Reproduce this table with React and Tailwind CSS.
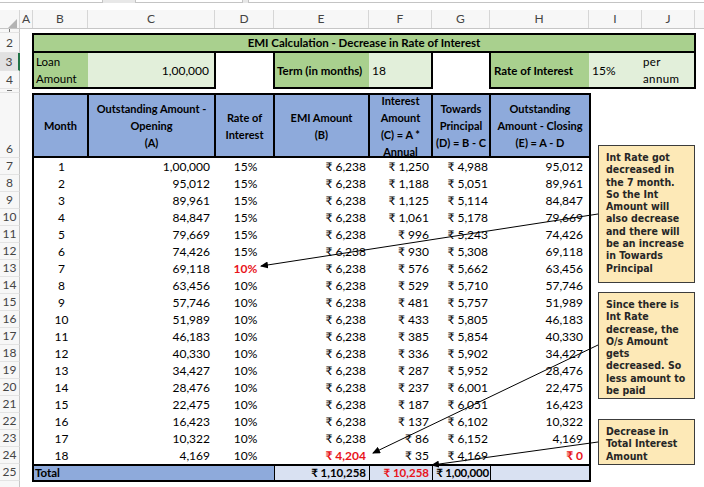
import React from 'react';

const GREEN = 'bg-[#a9d08e]';
const LIGHT_GREEN = 'bg-[#e2efda]';

// column letters across the top, widths follow the sheet grid
const colHeads = [
  { label: 'A', cls: 'w-[13px]' },
  { label: 'B', cls: 'w-[55px]' },
  { label: 'C', cls: 'w-[127px]' },
  { label: 'D', cls: 'w-[59px]' },
  { label: 'E', cls: 'w-[95px]' },
  { label: 'F', cls: 'w-[63px]' },
  { label: 'G', cls: 'w-[58px]' },
  { label: 'H', cls: 'w-[99px]' },
  { label: 'I', cls: 'w-[53px]' },
  { label: 'J', cls: 'w-[53px]' },
];

const data = [
  [1, '1,00,000', '15%', '6,238', '1,250', '4,988', '95,012'],
  [2, '95,012', '15%', '6,238', '1,188', '5,051', '89,961'],
  [3, '89,961', '15%', '6,238', '1,125', '5,114', '84,847'],
  [4, '84,847', '15%', '6,238', '1,061', '5,178', '79,669'],
  [5, '79,669', '15%', '6,238', '996', '5,243', '74,426'],
  [6, '74,426', '15%', '6,238', '930', '5,308', '69,118'],
  [7, '69,118', '10%', '6,238', '576', '5,662', '63,456'],
  [8, '63,456', '10%', '6,238', '529', '5,710', '57,746'],
  [9, '57,746', '10%', '6,238', '481', '5,757', '51,989'],
  [10, '51,989', '10%', '6,238', '433', '5,805', '46,183'],
  [11, '46,183', '10%', '6,238', '385', '5,854', '40,330'],
  [12, '40,330', '10%', '6,238', '336', '5,902', '34,427'],
  [13, '34,427', '10%', '6,238', '287', '5,952', '28,476'],
  [14, '28,476', '10%', '6,238', '237', '6,001', '22,475'],
  [15, '22,475', '10%', '6,238', '187', '6,051', '16,423'],
  [16, '16,423', '10%', '6,238', '137', '6,102', '10,322'],
  [17, '10,322', '10%', '6,238', '86', '6,152', '4,169'],
  [18, '4,169', '10%', '4,204', '35', '4,169', '₹ 0'],
];

const TopStrip = () => (
  <div className="h-[10px] bg-white">
    <div className="flex h-[3px] bg-[#e8e8e8]">
      <div className="w-[103px] bg-white border-b border-r border-[#c4c4c4]" />
      <div className="w-[32px]" />
      <div className="w-[108px] bg-white border-b border-x border-[#c4c4c4]" />
      <div className="w-[5px]" />
      <div className="flex-1 bg-white border-b border-l border-[#c4c4c4]" />
    </div>
  </div>
);

const ColHeaders = () => (
  <div className="flex h-[19px] bg-[#f7f7f7] border-b border-[#c6c6c6] text-[12px] text-[#444]">
    <div className="relative w-[20px] border-r border-[#d6d6d6]">
      <svg className="absolute left-[8px] top-[9px]" width="9" height="9" viewBox="0 0 9 9">
        <polygon points="9,0 9,9 0,9" fill="#b4b4b4" />
      </svg>
    </div>
    {colHeads.map((c) => (
      <div key={c.label} className={`${c.cls} flex items-center justify-center border-r border-[#d6d6d6]`}>
        {c.label}
      </div>
    ))}
    <div className="flex-1" />
  </div>
);

const rowHeads = [
  { n: '', cls: 'h-[4px]', mark: 'tick' },
  { n: '2', cls: 'h-[20px]' },
  { n: '3', cls: 'h-[18px]', active: true },
  { n: '4', cls: 'h-[18px]' },
  { n: '', cls: 'h-[4px]', mark: 'dash' },
  { n: '6', cls: 'h-[65px] items-end pb-[1px]' },
];
for (let i = 7; i <= 25; i++) rowHeads.push({ n: String(i), cls: 'h-[17px]' });

const RowHeaders = () => (
  <div className="w-[20px] bg-[#f7f7f7] text-[12px] text-[#444] leading-[14px]">
    {rowHeads.map((r, i) => (
      <div
        key={i}
        className={`${r.cls} flex justify-center ${r.cls.includes('items-end') ? '' : 'items-center'} border-b border-[#e3e3e3] ${
          r.active ? 'bg-[#e1e1e1] border-r-2 border-r-[#217346]' : 'border-r border-r-[#c6c6c6]'
        }`}
      >
        {r.mark === 'tick' && <div className="w-[1px] h-[3px] bg-[#777] self-start" />}
        {r.mark === 'dash' && <div className="w-[5px] h-[1px] bg-[#777]" />}
        {r.n}
      </div>
    ))}
    <div className="h-[6px] border-r border-[#c6c6c6]" />
  </div>
);

const InputBoxes = () => (
  <div className="flex h-[36px] ml-[12px] text-[11.5px] leading-[17px]">
    <div className="flex w-[184px] border-2 border-t-0 border-black">
      <div className={`w-[54px] ${GREEN} flex items-center px-[2px]`}>
        Loan
        <br />
        Amount
      </div>
      <div className={`flex-1 ${LIGHT_GREEN} flex items-center justify-end pr-[5px] text-[12px]`}>1,00,000</div>
    </div>
    <div className="w-[57px]" />
    <div className="flex w-[160px] border-2 border-t-0 border-black">
      <div className={`w-[94px] ${GREEN} flex items-center px-[2px] font-bold whitespace-nowrap`}>Term (in months)</div>
      <div className={`flex-1 ${LIGHT_GREEN} flex items-center pl-[3px] text-[12px]`}>18</div>
    </div>
    <div className="w-[56px]" />
    <div className="flex w-[207px] border-2 border-t-0 border-black">
      <div className={`w-[98px] ${GREEN} flex items-center px-[3px] font-bold whitespace-nowrap`}>Rate of Interest</div>
      <div className={`w-[53px] ${LIGHT_GREEN} flex items-center pl-[3px] text-[12px]`}>15%</div>
      <div className={`flex-1 ${LIGHT_GREEN} flex items-center pl-[1px] tracking-[0.4px]`}>
        per
        <br />
        annum
      </div>
    </div>
  </div>
);

const Head = ({ cls, children }) => (
  <div className={`${cls} flex items-center justify-center text-center border-r-2 border-black overflow-hidden`}>
    <div>{children}</div>
  </div>
);

const EmiTable = () => (
  <div className="ml-[12px] w-[559px] border-2 border-black text-[12px]">
    <div className="flex h-[63px] bg-[#8eaadb] border-b-2 border-black font-bold leading-[17px] text-[11px]">
      <Head cls="w-[55px]">Month</Head>
      <Head cls="w-[127px]">
        Outstanding Amount -<br />
        Opening
        <br />
        (A)
      </Head>
      <Head cls="w-[59px]">
        Rate of
        <br />
        Interest
      </Head>
      <Head cls="w-[95px]">
        EMI Amount
        <br />
        (B)
      </Head>
      <Head cls="w-[63px]">
        Interest
        <br />
        Amount
        <br />
        (C) = A *<br />
        Annual
      </Head>
      <Head cls="w-[58px]">
        Towards
        <br />
        Principal
        <br />
        (D) = B - C
      </Head>
      <div className="flex-1 flex items-center justify-center text-center">
        <div>
          Outstanding
          <br />
          Amount - Closing
          <br />
          (E) = A - D
        </div>
      </div>
    </div>

    {data.map((r) => {
      const last = r[0] === 18;
      return (
        <div key={r[0]} className="flex h-[17px] items-center text-black">
          <div className="w-[55px] text-center">{r[0]}</div>
          <div className="w-[127px] text-right pr-[6px]">{r[1]}</div>
          <div className={`w-[59px] text-center ${r[0] === 7 ? 'text-[#e8141b] font-bold' : ''}`}>{r[2]}</div>
          <div className={`w-[95px] text-right pr-[4px] ${last ? 'text-[#e8141b] font-bold' : ''}`}>₹ {r[3]}</div>
          <div className="w-[63px] text-right pr-[4px]">₹ {r[4]}</div>
          <div className="w-[58px] text-right pr-[3px]">₹ {r[5]}</div>
          <div className={`flex-1 text-right pr-[6px] ${last ? 'text-[#e8141b] font-bold' : ''}`}>{r[6]}</div>
        </div>
      );
    })}

    <div className="flex h-[16px] border-t-2 border-black font-bold leading-[14px] text-[11.5px]">
      <div className="w-[241px] bg-[#8eaadb] border-r border-black pl-[1px]">Total</div>
      <div className="w-[95px] bg-[#d9e1f2] border-r border-black text-right pr-[3px]">₹ 1,10,258</div>
      <div className="w-[63px] bg-[#d9e1f2] border-r border-black text-right pr-[3px] text-[#e8141b]">₹ 10,258</div>
      <div className="w-[58px] bg-[#d9e1f2] border-r border-black text-right pr-[1px] tracking-[-0.2px] whitespace-nowrap">₹ 1,00,000</div>
      <div className="flex-1 bg-[#d9e1f2]" />
    </div>
  </div>
);

const Note = ({ cls, children }) => (
  <div
    className={`absolute left-[598px] w-[97px] ${cls} bg-[#fde9b7] border border-[#3c3c3c] pl-[7px] pt-[5px] font-['DejaVu_Sans_Condensed','DejaVu_Sans',sans-serif] font-bold text-[10.5px] leading-[12.3px] text-[#262626] whitespace-nowrap`}
  >
    {children}
  </div>
);

const Arrows = () => (
  <svg className="absolute left-0 top-0 pointer-events-none" width="704" height="487" viewBox="0 0 704 487">
    <defs>
      <marker id="head" markerWidth="8" markerHeight="7" refX="7" refY="3.5" orient="auto" markerUnits="userSpaceOnUse">
        <polygon points="0,0 8,3.5 0,7" fill="#000" />
      </marker>
    </defs>
    <line x1="598" y1="214" x2="261" y2="266" stroke="#000" strokeWidth="1" markerEnd="url(#head)" />
    <line x1="598" y1="345" x2="373" y2="453" stroke="#000" strokeWidth="1" markerEnd="url(#head)" />
    <line x1="598" y1="442" x2="432" y2="465" stroke="#000" strokeWidth="1" markerEnd="url(#head)" />
  </svg>
);

export default function App() {
  return (
    <div className="relative w-[704px] h-[487px] overflow-hidden bg-white text-black font-['Lato','Noto_Sans',sans-serif]">
      <TopStrip />
      <ColHeaders />
      <div className="flex">
        <RowHeaders />
        <div className="flex-1">
          <div className="h-[4px]" />
          <div className="ml-[12px] w-[664px] h-[20px] border-2 border-black bg-[#a9d08e] flex items-center justify-center font-bold text-[11.5px]">
            EMI Calculation - Decrease in Rate of Interest
          </div>
          <InputBoxes />
          <div className="h-[4px]" />
          <EmiTable />
        </div>
      </div>

      <Note cls="top-[145px] h-[138px]">
        Int Rate got
        <br />
        decreased in
        <br />
        the 7 month.
        <br />
        So the Int
        <br />
        Amount will
        <br />
        also decrease
        <br />
        and there will
        <br />
        be an increase
        <br />
        in Towards
        <br />
        Principal
      </Note>
      <Note cls="top-[292px] h-[107px]">
        Since there is
        <br />
        Int Rate
        <br />
        decrease, the
        <br />
        O/s Amount
        <br />
        gets
        <br />
        decreased. So
        <br />
        less amount to
        <br />
        be paid
      </Note>
      <Note cls="top-[419px] h-[46px]">
        Decrease in
        <br />
        Total Interest
        <br />
        Amount
      </Note>
      <Arrows />
    </div>
  );
}
